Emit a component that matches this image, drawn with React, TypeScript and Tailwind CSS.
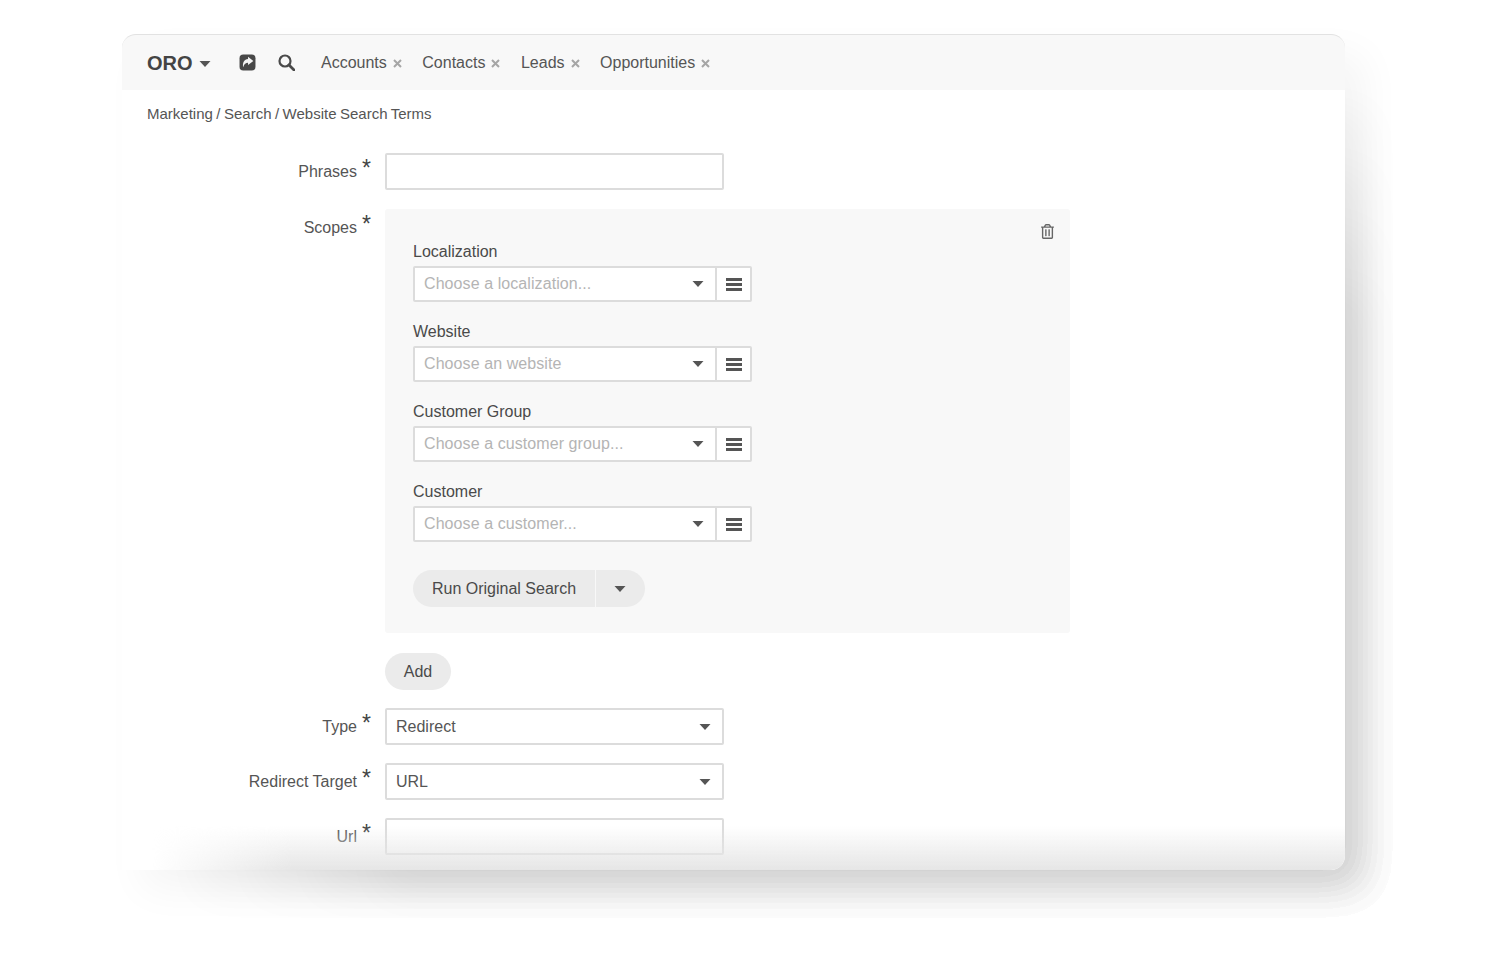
import React from 'react';
import { FaRegTrashAlt } from 'react-icons/fa';

const Caret = ({ className = '' }: { className?: string }) => (
  <svg viewBox="0 0 12 6" className={`w-[12px] h-[6px] fill-[#555] ${className}`}>
    <path d="M0.5 0h11L6 6z" />
  </svg>
);

const ShareIcon = () => (
  <svg viewBox="0 0 16 16" className="w-[17px] h-[17px]">
    <rect x="0.5" y="0.5" width="15" height="15" rx="3.5" fill="#484848" />
    <path d="M8.5 2.6l5 3.900-5 3.900V8.300C6.400 8.300 4.900 9.300 4 12.500 3 8.300 5 5 8.500 4.700z" fill="#f4f4f4" />
  </svg>
);

const SearchIcon = () => (
  <svg viewBox="0 0 17 17" className="ml-[22px] w-[17px] h-[17px] fill-none stroke-[#4a4a4a]">
    <circle cx="7" cy="7" r="5.500" strokeWidth="2.200" />
    <path d="M11 11l5 5" strokeWidth="2.800" strokeLinecap="round" />
  </svg>
);

const CloseIcon = () => (
  <svg viewBox="0 0 9 9" className="w-[9px] h-[9px] mt-[2px] fill-none stroke-[#a6a6a6]">
    <path d="M1 1l7 7M8 1l-7 7" strokeWidth="2" />
  </svg>
);

const NavTab = ({ label }: { label: string }) => (
  <div className="flex items-center gap-[6px]">
    <span>{label}</span>
    <CloseIcon />
  </div>
);

const Required = ({ label, className = '' }: { label: string; className?: string }) => (
  <div className={`w-[263px] shrink-0 flex justify-end pr-[28px] text-[16px] text-[#555] ${className}`}>
    <span>{label}</span>
    <span className="relative w-0">
      <span className="absolute left-[5px] -top-[9px] text-[23px] text-[#444]">*</span>
    </span>
  </div>
);

const Field = ({ label, children }: { label: string; children: React.ReactNode }) => (
  <div className="flex items-center h-[37px]">
    <Required label={label} />
    {children}
  </div>
);

const TextBox = ({ children }: { children?: React.ReactNode }) => (
  <div className="w-[339px] h-[37px] bg-white border-2 border-[#dcdcdc] rounded-[2px] flex items-center justify-between pl-[9px] pr-[11px] text-[16px] text-[#555]">
    {children}
  </div>
);

const Lookup = ({ label, placeholder }: { label: string; placeholder: string }) => (
  <div className="h-[64px] mb-[16px]">
    <div className="h-[28px] text-[16px] leading-[28px] text-[#4a4a4a]">{label}</div>
    <div className="flex w-[339px] h-[36px] bg-white border-2 border-[#dcdcdc] rounded-[2px]">
      <div className="w-[302px] flex items-center justify-between pl-[9px] pr-[11px] border-r-2 border-[#dcdcdc]">
        <span className="text-[16px] tracking-[0.08px] text-[#b4b4b4]">{placeholder}</span>
        <Caret />
      </div>
      <div className="flex-1 flex flex-col items-center justify-center gap-[2px]">
        <div className="w-[16px] h-[3px] bg-[#555]" />
        <div className="w-[16px] h-[3px] bg-[#555]" />
        <div className="w-[16px] h-[3px] bg-[#555]" />
      </div>
    </div>
  </div>
);

export default function App() {
  return (
    <div className="w-[1500px] h-[975px] bg-white overflow-hidden pt-[34px] pl-[122px] font-['Liberation_Sans',Arial,sans-serif]">
      <div className="relative w-[1223px] h-[836px] bg-white rounded-t-[14px] rounded-br-[14px] shadow-[20px_20px_40px_0_rgba(0,0,0,0.045),50px_50px_40px_-30px_rgba(0,0,0,0.045),80px_80px_40px_-60px_rgba(0,0,0,0.045),110px_110px_40px_-90px_rgba(0,0,0,0.045),140px_140px_40px_-120px_rgba(0,0,0,0.045)]">
        <header className="h-[56px] bg-[#f8f8f8] border-t border-[#e2e2e2] rounded-t-[14px] flex items-center pl-[25px] text-[16px] text-[#555]">
          <div className="flex items-center gap-[6px] text-[20px] font-bold text-[#444] w-[92px]">
            ORO
            <Caret className="mt-[2px]" />
          </div>
          <ShareIcon />
          <SearchIcon />
          <div className="ml-[26px] flex items-center gap-[20.5px]">
            <NavTab label="Accounts" />
            <NavTab label="Contacts" />
            <NavTab label="Leads" />
            <NavTab label="Opportunities" />
          </div>
        </header>

        <div className="h-[63px] pl-[25px] pt-[15px] text-[15px] leading-[18px] [word-spacing:-0.7px] text-[#555]">
          Marketing / Search / Website Search Terms
        </div>

        <div className="flex flex-col">
          <Field label="Phrases">
            <TextBox />
          </Field>

          <div className="flex mt-[19px]">
            <Required label="Scopes" className="pt-[7px]" />
            <div className="relative w-[685px] h-[424px] bg-[#f8f8f8] rounded-[3px] pl-[28px] pt-[29px]">
              <FaRegTrashAlt className="absolute right-[16px] top-[15px] w-[13px] h-[15px] text-[#666]" />
              <Lookup label="Localization" placeholder="Choose a localization..." />
              <Lookup label="Website" placeholder="Choose an website" />
              <Lookup label="Customer Group" placeholder="Choose a customer group..." />
              <Lookup label="Customer" placeholder="Choose a customer..." />
              <div className="flex w-[232px] h-[37px] mt-[28px] text-[16px] text-[#4a4a4a]">
                <div className="w-[182px] bg-[#ebebeb] rounded-l-full flex items-center justify-center">
                  Run Original Search
                </div>
                <div className="flex-1 ml-[1px] bg-[#ebebeb] rounded-r-full flex items-center justify-center pr-[1px]">
                  <Caret />
                </div>
              </div>
            </div>
          </div>

          <div className="ml-[263px] mt-[20px] w-[66px] h-[37px] bg-[#ebebeb] rounded-full flex items-center justify-center text-[16px] text-[#4a4a4a]">
            Add
          </div>

          <div className="mt-[18px] flex flex-col gap-[18px]">
            <Field label="Type">
              <TextBox>
                Redirect
                <Caret />
              </TextBox>
            </Field>
            <Field label="Redirect Target">
              <TextBox>
                URL
                <Caret />
              </TextBox>
            </Field>
            <Field label="Url">
              <TextBox />
            </Field>
          </div>
        </div>

        <div className="absolute left-0 right-0 bottom-0 h-[44px] rounded-br-[14px] bg-gradient-to-t from-[#e6e6e6] to-transparent [mask-image:linear-gradient(to_right,transparent_30px,black_170px)] pointer-events-none" />
      </div>
    </div>
  );
}
